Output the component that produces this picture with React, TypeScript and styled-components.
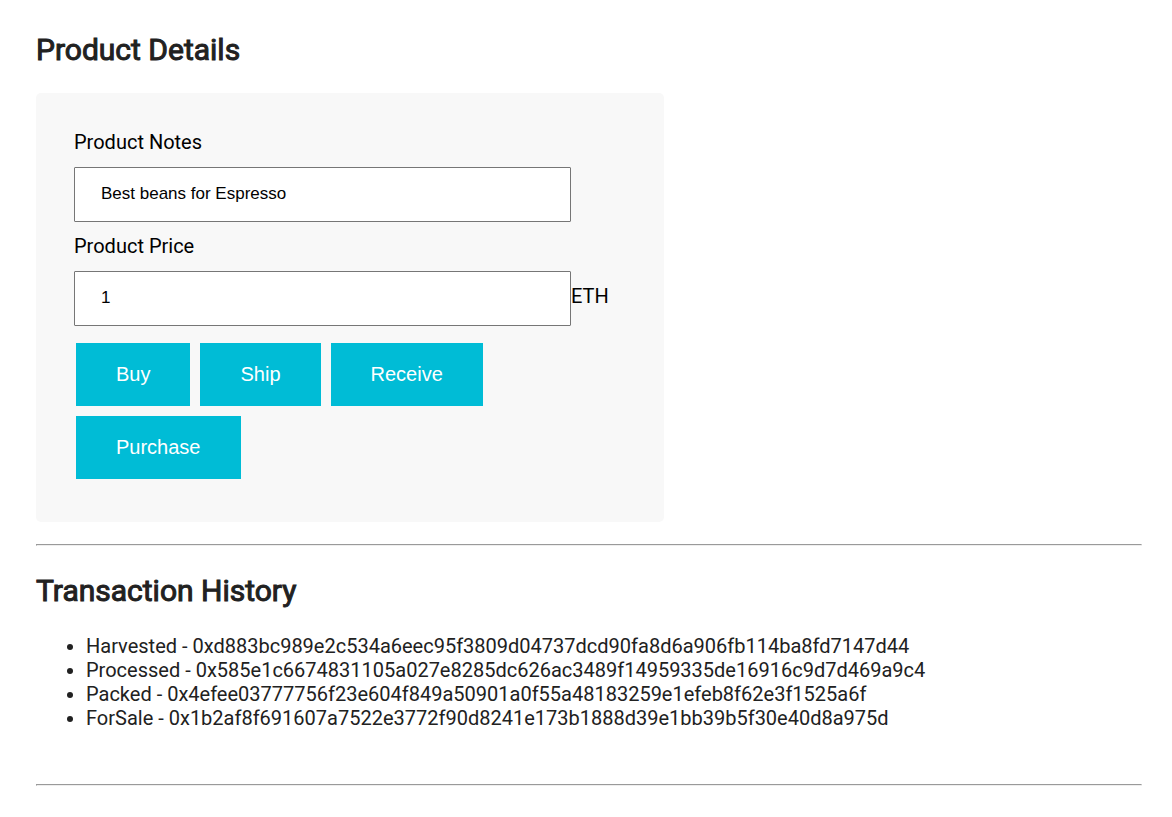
import React from "react";
import styled, { createGlobalStyle } from "styled-components";

const GlobalStyle = createGlobalStyle`
  body {
    margin: 0;
    background: #fff;
    color: #212121;
    font-family: Roboto, "Liberation Sans", sans-serif;
    font-size: 20px;
    line-height: 24px;
  }
`;

const Page = styled.main`
  padding: 32px 30px 30px 36px;
`;

const Heading = styled.h1`
  margin: 0 0 25px;
  font-size: 30px;
  line-height: 36px;
  font-weight: 400;
  -webkit-text-stroke: 1px currentColor;
`;

const Card = styled.form`
  box-sizing: border-box;
  max-width: 628px;
  padding: 37px 38px 38px;
  border-radius: 5px;
  background: #f8f8f8;
  color: #000;
`;

const Label = styled.label`
  display: block;
  margin-bottom: 13px;
`;

const Field = styled.div`
  display: flex;
  align-items: baseline;
  margin-bottom: 12px;
`;

const TextBox = styled.input`
  box-sizing: border-box;
  flex: 0 1 497px;
  min-width: 0;
  height: 55px;
  padding: 0 26px 2px;
  border: 1px solid #767676;
  border-radius: 1px;
  background: #fff;
  color: #000;
  font: 17px "Liberation Sans", Arial, sans-serif;
`;

const Actions = styled.div`
  display: flex;
  flex-wrap: wrap;
  gap: 10px;
  max-width: 480px;
  padding: 5px 2px;
`;

const Action = styled.button`
  padding: 20px 40px;
  border: 0;
  background: #00bcd6;
  color: #fff;
  font: 20px/23px "Liberation Sans", Arial, sans-serif;
  cursor: pointer;
`;

const Divider = styled.hr`
  margin: 22px 0 27px;
  border: 1px solid;
  border-color: #9a9a9a #eee #eee #9a9a9a;
`;

const History = styled.ul`
  margin: 0 0 54px;
  padding-left: 50px;
`;

const transactions = [
  ["Harvested", "0xd883bc989e2c534a6eec95f3809d04737dcd90fa8d6a906fb114ba8fd7147d44"],
  ["Processed", "0x585e1c6674831105a027e8285dc626ac3489f14959335de16916c9d7d469a9c4"],
  ["Packed", "0x4efee03777756f23e604f849a50901a0f55a48183259e1efeb8f62e3f1525a6f"],
  ["ForSale", "0x1b2af8f691607a7522e3772f90d8241e173b1888d39e1bb39b5f30e40d8a975d"],
];

export default function App() {
  return (
    <>
      <GlobalStyle />
      <Page>
        <Heading>Product Details</Heading>
        <Card>
          <Label htmlFor="notes">Product Notes</Label>
          <Field>
            <TextBox id="notes" type="text" defaultValue="Best beans for Espresso" />
          </Field>
          <Label htmlFor="price">Product Price</Label>
          <Field>
            <TextBox id="price" type="text" defaultValue="1" />
            <span>ETH</span>
          </Field>
          <Actions>
            {["Buy", "Ship", "Receive", "Purchase"].map((name) => (
              <Action key={name} type="button">{name}</Action>
            ))}
          </Actions>
        </Card>
        <Divider />
        <Heading as="h2">Transaction History</Heading>
        <History>
          {transactions.map(([stage, hash]) => (
            <li key={hash}>{stage} - {hash}</li>
          ))}
        </History>
        <Divider />
      </Page>
    </>
  );
}
